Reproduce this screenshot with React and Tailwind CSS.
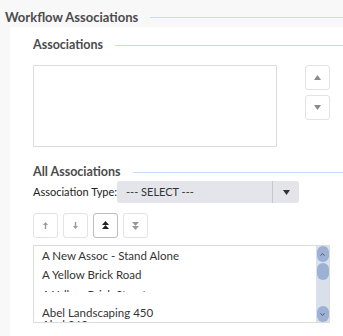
import { ChevronUp, ChevronDown } from 'lucide-react';

const font = { fontFamily: 'Lato, "Noto Sans", sans-serif' };

const Legend = ({ title, size = 'text-[13px]' }) => (
  <div className="flex items-center gap-3 h-[18px]">
    <span className={`${size} leading-[18px] font-bold text-[#4b4b4b] whitespace-nowrap`}>{title}</span>
    <div className="h-px flex-1 bg-[#c9d9f8]" />
  </div>
);

const Tri = ({ up = true, color = '#8a8a8a' }) => (
  <svg width="7" height="5" viewBox="0 0 7 5">
    <path d={up ? 'M3.5 0L7 5H0z' : 'M0 0h7L3.5 5z'} fill={color} />
  </svg>
);

const MoveBtn = ({ children, active }) => (
  <button
    className={`w-[25px] h-[25px] flex items-center justify-center rounded-[3px] border bg-white ${
      active ? 'border-[#bdbdbd]' : 'border-[#e3e3e3]'
    }`}
  >
    {children}
  </button>
);

const Arrow = ({ dir = 'up', double, color = '#9a9a9a' }) => (
  <svg width="7" height="9" viewBox="0 0 7 9">
    {dir === 'up' ? (
      double ? (
        <path d="M3.5 0L7 4H0zM3.5 4L7 8H0z" fill={color} />
      ) : (
        <path d="M3.5 1L6 4H4.2V8H2.8V4H1z" fill={color} />
      )
    ) : double ? (
      <path d="M0 1h7L3.5 5zM0 5h7L3.5 9z" fill={color} />
    ) : (
      <path d="M2.8 1H4.2V5H6L3.5 8L1 5H2.8z" fill={color} />
    )}
  </svg>
);

const items = ['A New Assoc - Stand Alone', 'A Yellow Brick Road', 'A Yellow Brick Street', 'Abel Landscaping 450', 'Abel 360'];

export default function App() {
  return (
    <div className="w-[343px] h-[336px] bg-[#f8f8f8] overflow-hidden text-[#333]" style={font}>
      <div className="pl-[5px] pt-[8px]">
        <Legend title="Workflow Associations" />
      </div>
      <div className="ml-[10px] mt-[1px] bg-white h-full pl-[23px] pt-[9px]">
        <Legend title="Associations" size="text-[12.5px]" />
        <div className="flex mt-[11px]">
          <div className="w-[244px] h-[82px] border border-[#dcdcdc]" />
          <div className="flex flex-col gap-[5px] ml-[28px]">
            <MoveBtn><Tri up /></MoveBtn>
            <MoveBtn><Tri up={false} /></MoveBtn>
          </div>
        </div>

        <div className="mt-[16px]">
          <Legend title="All Associations" size="text-[12.5px]" />
        </div>
        <div className="flex items-center">
          <span className="text-[11px] text-[#222] w-[84px] whitespace-nowrap">Association Type:</span>
          <div className="w-[182px] h-[22px] flex rounded-[3px] bg-[#e3e5ea]">
            <span className="flex-1 text-[11px] text-[#333] pl-[9px] leading-[22px]">--- SELECT ---</span>
            <div className="w-[27px] border-l border-[#c8c8c8] flex items-center justify-center">
              <Tri up={false} color="#333" />
            </div>
          </div>
        </div>

        <div className="flex gap-[5px] mt-[10px]">
          <MoveBtn><Arrow dir="up" /></MoveBtn>
          <MoveBtn><Arrow dir="down" /></MoveBtn>
          <MoveBtn active><Arrow dir="up" double color="#222" /></MoveBtn>
          <MoveBtn><Arrow dir="down" double /></MoveBtn>
        </div>

        <div className="mt-[7px] w-[297px] h-[78px] border border-[#dcdcdc] flex overflow-hidden">
          <div className="flex-1 pl-[8px] text-[11.5px] text-[#333]">
            {items.map((t, i) => (
              <div key={t} className="h-[19.3px] leading-[19.3px] whitespace-nowrap">
                {i === 2 ? (
                  <div className="h-[7px] overflow-hidden">{t}</div>
                ) : i === 3 ? (
                  <div className="-mt-[1px]">{t}</div>
                ) : i === 4 ? (
                  <div className="-mt-[7px]">{t}</div>
                ) : (
                  t
                )}
              </div>
            ))}
          </div>
          <div className="w-[13px] bg-[#d9e0ec] flex flex-col items-center">
            <div className="w-[12px] h-[16px] rounded-full bg-[#9cb1d3] flex items-center justify-center">
              <ChevronUp size={7} strokeWidth={3} color="#3a4a66" />
            </div>
            <div className="w-[12px] h-[17px] rounded-full bg-[#9cb1d3] mt-[1px]" />
            <div className="flex-1" />
            <div className="w-[12px] h-[16px] rounded-full bg-[#9cb1d3] flex items-center justify-center">
              <ChevronDown size={7} strokeWidth={3} color="#3a4a66" />
            </div>
          </div>
        </div>
      </div>
    </div>
  );
}
